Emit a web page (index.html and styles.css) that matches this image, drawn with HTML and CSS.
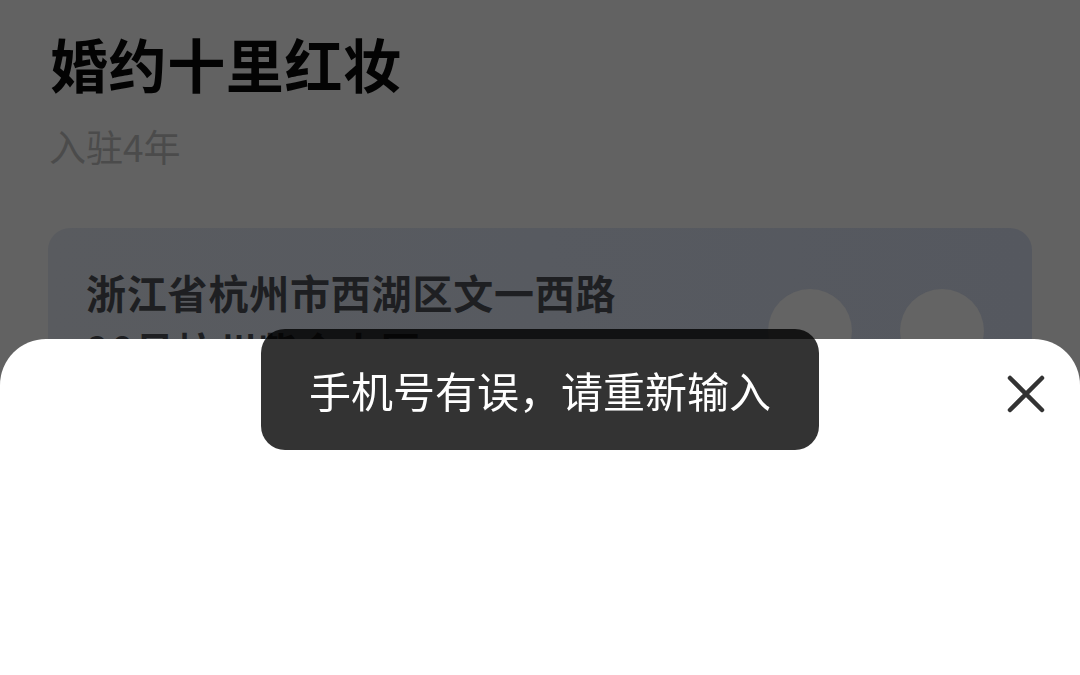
FILE: index.html
```html
<!DOCTYPE html>
<html lang="zh-CN">
<head>
<meta charset="utf-8">
<title>婚约十里红妆</title>
<link rel="stylesheet" href="styles.css">
</head>
<body>
<div class="page">
  <h1 class="title">婚约十里红妆</h1>
  <div class="sub">入驻4年</div>
  <div class="card">
    <div class="addr">浙江省杭州市西湖区文一西路90号杭州紫金大厦</div>
    <div class="actions">
      <span class="circle"></span>
      <span class="circle"></span>
    </div>
  </div>
</div>
<div class="sheet">
  <button class="close" aria-label="关闭">
    <svg width="40" height="40" viewBox="0 0 40 40"><path d="M4 4 L36 36 M36 4 L4 36" stroke="#333333" stroke-width="4.5" stroke-linecap="round" fill="none"/></svg>
  </button>
</div>
<div class="toast">手机号有误，请重新输入</div>
</body>
</html>
```
FILE: styles.css
```css
html, body {
  margin: 0;
  padding: 0;
}
body {
  width: 1080px;
  height: 675px;
  overflow: hidden;
  background: #626262;
  font-family: "Noto Sans CJK SC", "Noto Sans", sans-serif;
}
.page {
  padding: 28px 48px 0 48px;
}
.title {
  margin: 0 0 0 2px;
  font-size: 58px;
  line-height: 70px;
  font-weight: 700;
  letter-spacing: 0.6px;
  color: #030303;
}
.sub {
  margin: 23px 0 0 1px;
  font-size: 37px;
  line-height: 50px;
  color: #4b4b4b;
}
.card {
  margin-top: 57px;
  height: 300px;
  border-radius: 22px;
  background: linear-gradient(90deg, #595b5f 0%, #575a60 50%, #55585f 100%);
  display: flex;
  justify-content: space-between;
  align-items: flex-start;
  padding: 35px 48px 0 38px;
}
.addr {
  width: 545px;
  font-size: 40px;
  line-height: 58px;
  font-weight: 700;
  letter-spacing: 0.8px;
  color: #1e1f22;
}
.actions {
  display: flex;
  gap: 48px;
  margin-top: 26px;
}
.circle {
  width: 84px;
  height: 84px;
  border-radius: 50%;
  background: #646464;
}
.sheet {
  position: fixed;
  left: 0;
  right: 0;
  top: 339px;
  bottom: 0;
  background: #ffffff;
  border-radius: 46px 46px 0 0;
}
.close {
  position: absolute;
  top: 35px;
  right: 34px;
  width: 40px;
  height: 40px;
  padding: 0;
  border: 0;
  background: none;
}
.close svg {
  display: block;
}
.toast {
  position: fixed;
  top: 329px;
  left: 261px;
  width: 558px;
  height: 121px;
  border-radius: 24px;
  background: rgba(0, 0, 0, 0.8);
  color: #ffffff;
  font-size: 42px;
  display: flex;
  align-items: center;
  justify-content: center;
}
```
